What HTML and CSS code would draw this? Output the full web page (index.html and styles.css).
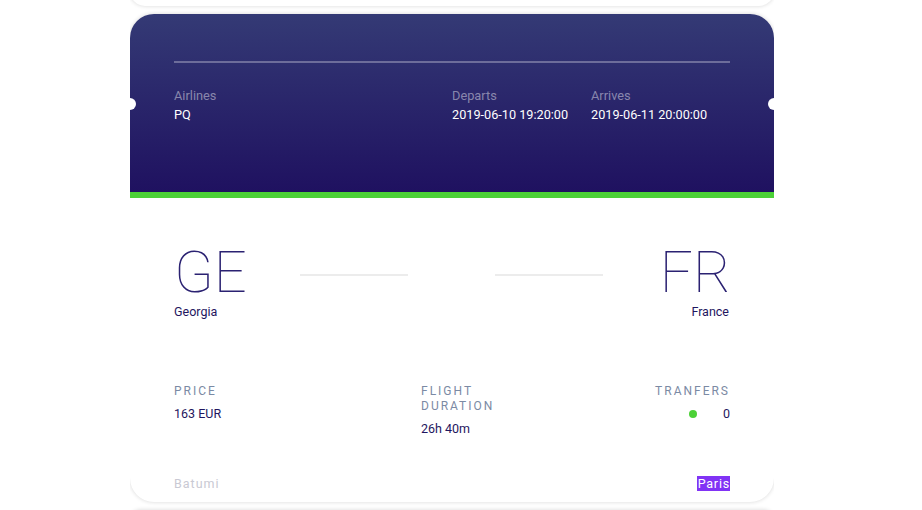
FILE: index.html
```html
<!DOCTYPE html>
<html>
<head>
<meta charset="utf-8">
<link rel="stylesheet" href="styles.css">
</head>
<body>
<div class="list">
  <div class="card card-prev"></div>
  <div class="card">
    <div class="head">
      <span class="notch notch-left"></span>
      <span class="notch notch-right"></span>
      <div class="head-rule"></div>
      <div class="head-info">
        <div class="info">
          <div class="info-label">Airlines</div>
          <div class="info-value">PQ</div>
        </div>
        <div class="info">
          <div class="info-label">Departs</div>
          <div class="info-value">2019-06-10 19:20:00</div>
        </div>
        <div class="info">
          <div class="info-label">Arrives</div>
          <div class="info-value">2019-06-11 20:00:00</div>
        </div>
      </div>
    </div>
    <div class="stripe"></div>
    <div class="body">
      <div class="route">
        <div class="place">
          <div class="code">GE</div>
          <div class="country">Georgia</div>
        </div>
        <div class="path">
          <span class="path-line"></span>
          <span class="path-line"></span>
        </div>
        <div class="place place-end">
          <div class="code">FR</div>
          <div class="country">France</div>
        </div>
      </div>
      <div class="stats">
        <div class="stat">
          <div class="stat-label">Price</div>
          <div class="stat-value">163 EUR</div>
        </div>
        <div class="stat stat-duration">
          <div class="stat-label">Flight duration</div>
          <div class="stat-value">26h 40m</div>
        </div>
        <div class="stat stat-end">
          <div class="stat-label">Tranfers</div>
          <div class="stat-value"><span class="dot"></span>0</div>
        </div>
      </div>
      <div class="cities">
        <span class="city">Batumi</span>
        <span class="city city-selected">Paris</span>
      </div>
    </div>
  </div>
  <div class="card card-next"></div>
</div>
</body>
</html>
```

FILE: styles.css
```css
* { box-sizing: border-box; }
html, body {
  margin: 0;
  padding: 0;
  background: #fff;
  overflow: hidden;
  height: 510px;
}
body {
  font-family: Roboto, "Liberation Sans", sans-serif;
}
.list {
  width: 644px;
  height: 534px;
  margin: -24px 0 0 130px;
  display: flex;
  flex-direction: column;
  gap: 8px;
  overflow: hidden;
}
.card {
  background: #fff;
  border-radius: 24px;
  box-shadow: 0 0 4px rgba(0, 0, 0, 0.16);
  overflow: hidden;
  flex-shrink: 0;
}
.card-prev { height: 30px; }
.card-next { height: 20px; }
.head {
  position: relative;
  height: 178px;
  padding: 47px 44px 0;
  background: linear-gradient(to bottom, #343a75 0%, #1f1160 100%);
}
.notch {
  position: absolute;
  top: 84px;
  width: 12px;
  height: 12px;
  border-radius: 50%;
  background: #fff;
}
.notch-left { left: -6px; }
.notch-right { right: -6px; }
.head-rule {
  height: 2px;
  background: rgba(255, 255, 255, 0.3);
}
.head-info {
  display: grid;
  grid-template-columns: 1fr 139px 139px;
  margin-top: 24px;
}
.info-label {
  font-size: 12.8px;
  line-height: 18px;
  color: rgba(255, 255, 255, 0.45);
}
.info-value {
  font-size: 12.7px;
  line-height: 19px;
  color: #fff;
}
.stripe {
  height: 6px;
  background: #4cd137;
}
.body {
  padding: 43px 44px 0;
  height: 304px;
}
.route {
  display: flex;
  align-items: flex-start;
}
.place { width: 120px; }
.place-end { text-align: right; }
.code {
  font-size: 58px;
  font-weight: 100;
  line-height: 62px;
  color: #2b2272;
  letter-spacing: 0;
}
.place-end .code { margin-right: -1px; }
.country {
  margin-top: 1px;
  font-size: 12.5px;
  line-height: 15px;
  color: #1f1660;
}
.place-end .country { margin-right: 1px; }
.path {
  flex: 1;
  display: flex;
  justify-content: center;
  gap: 87px;
  padding-top: 33px;
  padding-right: 2px;
}
.path-line {
  width: 108px;
  height: 2px;
  background: #ececec;
}
.stats {
  display: grid;
  grid-template-columns: 247px 1fr auto;
  margin-top: 65px;
}
.stat-label {
  font-size: 12px;
  line-height: 15px;
  letter-spacing: 2px;
  text-transform: uppercase;
  color: #7b8aa4;
}
.stat-duration .stat-label { width: 90px; }
.stat-value {
  margin-top: 7px;
  font-size: 12.5px;
  line-height: 16px;
  color: #1f1660;
}
.stat-end { text-align: right; }
.dot {
  display: inline-block;
  width: 8px;
  height: 8px;
  border-radius: 50%;
  background: #4cd137;
  margin-right: 26px;
}
.cities {
  display: flex;
  justify-content: space-between;
  margin-top: 39px;
}
.city {
  font-size: 12.5px;
  line-height: 15px;
  letter-spacing: 1px;
  color: #c9c9d3;
}
.city-selected {
  background: #8133f5;
  color: #fff;
  letter-spacing: 0.8px;
  padding-left: 1px;
}
```
